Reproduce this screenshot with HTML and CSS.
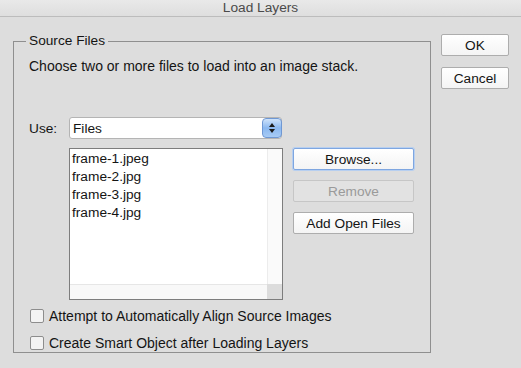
FILE: index.html
```html
<!DOCTYPE html>
<html>
<head>
<meta charset="utf-8">
<link rel="stylesheet" href="styles.css">
</head>
<body>
<div class="dialog">
  <div class="titlebar">Load Layers</div>
  <div class="content">
    <fieldset class="group">
      <legend class="legend">Source Files</legend>
      <div class="intro">Choose two or more files to load into an image stack.</div>
      <div class="use-row">
        <span class="use-label">Use:</span>
        <div class="select">
          <span class="select-value">Files</span>
          <span class="stepper">
            <svg width="10" height="14" viewBox="0 0 10 14"><path d="M5 2 L8 6 H2 Z M5 12 L8 8 H2 Z" fill="#1a1a1a"/></svg>
          </span>
        </div>
      </div>
      <div class="files-row">
        <div class="listbox">
          <div class="list-items">
            <div class="item">frame-1.jpeg</div>
            <div class="item">frame-2.jpg</div>
            <div class="item">frame-3.jpg</div>
            <div class="item">frame-4.jpg</div>
          </div>
          <div class="vscroll"></div>
          <div class="hscroll"></div>
          <div class="corner"></div>
        </div>
        <div class="side-buttons">
          <button class="btn btn-focus">Browse...</button>
          <button class="btn btn-disabled">Remove</button>
          <button class="btn">Add Open Files</button>
        </div>
      </div>
      <label class="check"><span class="box"></span>Attempt to Automatically Align Source Images</label>
      <label class="check"><span class="box"></span>Create Smart Object after Loading Layers</label>
    </fieldset>
    <div class="actions">
      <button class="btn btn-action">OK</button>
      <button class="btn btn-action">Cancel</button>
    </div>
  </div>
</div>
</body>
</html>
```
FILE: styles.css
```css
* { box-sizing: border-box; }
html, body { margin: 0; padding: 0; }
body {
  width: 521px;
  height: 368px;
  background: #dddddd;
  font-family: "Liberation Sans", Arial, sans-serif;
  font-size: 13.7px;
  color: #141414;
  overflow: hidden;
}
.titlebar {
  height: 17px;
  line-height: 15px;
  text-align: center;
  color: #4a4a4a;
  background: linear-gradient(#e9e9e9, #dedede);
  border-bottom: 1px solid #bcbcbc;
}
.content {
  display: flex;
  align-items: flex-start;
  padding-left: 13px;
}
.group {
  margin: 16px 0 0 0;
  width: 418px;
  height: 320px;
  border: 1px solid #8f8f8f;
  padding: 0 0 0 15px;
  min-width: 0;
}
.legend {
  padding: 0 3px;
  margin-left: -3px;
  line-height: 16px;
}
.intro {
  margin-top: 9px;
  line-height: 16px;
  font-size: 14px;
}
.use-row {
  display: flex;
  align-items: center;
  margin-top: 43px;
  height: 22px;
}
.use-label { width: 40px; }
.select {
  width: 213px;
  height: 22px;
  background: #fff;
  border: 1px solid #b4b4b4;
  border-radius: 3px;
  display: flex;
  align-items: center;
  justify-content: space-between;
  padding-left: 3px;
}
.stepper {
  width: 20px;
  height: 20px;
  border-radius: 4px;
  background: linear-gradient(#cfe3fb, #8bb8f0 50%, #a7cbf5);
  border: 1px solid #6f98d4;
  display: flex;
  align-items: center;
  justify-content: center;
  margin-right: -1px;
}
.files-row {
  display: flex;
  margin-top: 9px;
  margin-left: 40px;
  gap: 10px;
}
.listbox {
  width: 214px;
  height: 152px;
  border: 1px solid #7d7d7d;
  background: #fff;
  display: grid;
  grid-template-columns: 1fr 15px;
  grid-template-rows: 1fr 15px;
}
.list-items { padding: 1px 0 0 2px; }
.item { line-height: 18px; }
.vscroll { background: #fafafa; border-left: 1px solid #ececec; }
.hscroll { background: #f8f8f8; border-top: 1px solid #e6e6e6; }
.corner { background: #dcdcdc; }
.side-buttons {
  display: flex;
  flex-direction: column;
  gap: 10px;
}
.btn {
  font-family: "Liberation Sans", Arial, sans-serif;
  font-size: 13.7px;
  color: #141414;
  width: 121px;
  height: 22px;
  padding: 0;
  background: linear-gradient(#ffffff, #f4f4f4);
  border: 1px solid #adadad;
  border-radius: 2px;
}
.btn-focus {
  border-color: #7ea6e0;
  box-shadow: 0 0 0 1px #b7cff0;
}
.btn-disabled {
  background: #e2e2e2;
  border-color: #c6c6c6;
  color: #9a9a9a;
}
.actions {
  display: flex;
  flex-direction: column;
  gap: 11px;
  margin-left: 10px;
  margin-top: 17px;
}
.btn-action { width: 68px; }
.check {
  display: flex;
  align-items: center;
  height: 14px;
  line-height: 14px;
  margin-left: 1px;
  font-size: 14px;
}
.files-row + .check { margin-top: 9px; }
.check + .check { margin-top: 13px; }
.box {
  width: 14px;
  height: 14px;
  border: 1px solid #8d8d8d;
  border-radius: 2px;
  background: #f3f3f3;
  margin-right: 5px;
}
```
